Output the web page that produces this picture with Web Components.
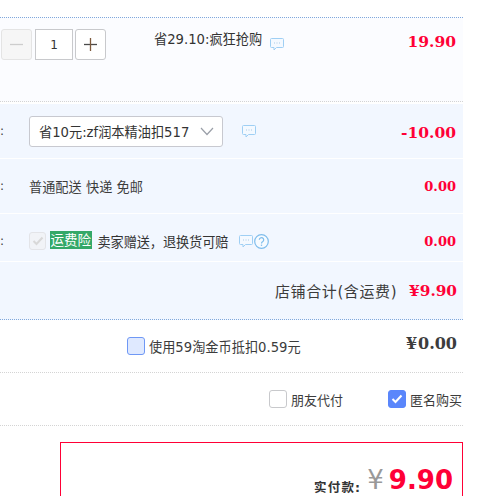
<!DOCTYPE html>
<html lang="zh">
<head>
<meta charset="utf-8">
<title>确认订单</title>
<style>
    html, body { margin: 0; height: 496px; overflow: hidden; background: #fff; }
    body { font: 13.2px "DejaVu Sans", "Noto Sans CJK SC", sans-serif; color: #3c3c3c; }
</style>
</head>
<body>
<order-page></order-page>
<script>
class ChatIcon extends HTMLElement {
    constructor() {
        super();
        this.attachShadow({ mode: 'open' });
        this.shadowRoot.innerHTML = `
            <style>
                :host { display: inline-flex; width: 14px; height: 13px; }
            </style>
            <svg width="14" height="13" viewBox="0 0 14 13" fill="none">
                <path d="M1.500 .5h11a1 1 0 0 1 1 1v7a1 1 0 0 1-1 1H6.500l-2.500 2.500V9.500H1.500a1 1 0 0 1-1-1v-7a1 1 0 0 1 1-1z" fill="#f4f9ff" stroke="#9fcff4"/>
                <path d="M4 5h1M6.500 5h1M9 5h1" stroke="#a9cbe6"/>
            </svg>
        `;
    }
}

class HelpIcon extends HTMLElement {
    constructor() {
        super();
        this.attachShadow({ mode: 'open' });
        this.shadowRoot.innerHTML = `
            <style>
                :host { display: inline-flex; width: 15px; height: 15px; }
            </style>
            <svg width="15" height="15" viewBox="0 0 15 15" fill="none">
                <circle cx="7.500" cy="7.500" r="6.800" fill="#f7fbff" stroke="#7fbdec" stroke-width="1.200"/>
                <path d="M5.300 5.800a2.200 2.200 0 1 1 3.500 1.800c-.8.500-1.300.9-1.300 1.900" stroke="#7fbdec" stroke-width="1.200"/>
                <path d="M7.500 10.600v1.300" stroke="#7fbdec" stroke-width="1.300"/>
            </svg>
        `;
    }
}

class QtyStepper extends HTMLElement {
    constructor() {
        super();
        this.attachShadow({ mode: 'open' });
        this.shadowRoot.innerHTML = `
            <style>
                :host { display: flex; }
                .btn, .val {
                    box-sizing: border-box;
                    height: 31px;
                    border: 1px solid #c8c9cc;
                    display: flex;
                    align-items: center;
                    justify-content: center;
                    background: #fff;
                }
                .btn { width: 31px; border-radius: 3px; }
                .btn--off { background: #f6f6f6; border-color: #e4e4e4; margin-right: 3px; }
                .val { width: 38px; margin-right: 2px; font: 12px "DejaVu Sans", sans-serif; color: #333; }
            </style>
            <div class="btn btn--off">
                <svg width="13" height="13"><path d="M0 6.500h13" stroke="#cdcdcd" stroke-width="1.300"/></svg>
            </div>
            <div class="val">1</div>
            <div class="btn">
                <svg width="13" height="13"><path d="M0 6.500h13" stroke="#4a4a4a" stroke-width="1.300"/><path d="M6.500 0v13" stroke="#7d5a3c" stroke-width="1.300"/></svg>
            </div>
        `;
    }
}

class CheckBox extends HTMLElement {
    constructor() {
        super();
        this.attachShadow({ mode: 'open' });
        const kind = this.getAttribute('kind') || 'empty';
        const tick = kind === 'on' || kind === 'off'
            ? `<svg width="12" height="10" viewBox="0 0 12 10"><path d="M1.500 5l3 3 6-6.500" fill="none" stroke="${kind === 'on' ? '#fff' : '#d8d8d8'}" stroke-width="2"/></svg>`
            : '';
        this.shadowRoot.innerHTML = `
            <style>
                :host { display: inline-flex; }
                .box {
                    box-sizing: border-box;
                    width: 18px;
                    height: 18px;
                    border-radius: 3px;
                    border: 1px solid #c8c9cc;
                    background: #fff;
                    display: flex;
                    align-items: center;
                    justify-content: center;
                }
                .on { background: #5a86fb; border-color: #5a86fb; }
                .off { width: 17px; background: #f1f3f7; border-color: #e3e4e8; }
                .hover { background: #dfe9ff; border-color: #6f98f5; }
            </style>
            <div class="box ${kind}">${tick}</div>
        `;
    }
}

class OrderLine extends HTMLElement {
    constructor() {
        super();
        this.attachShadow({ mode: 'open' });
        this.shadowRoot.innerHTML = `
            <style>
                :host {
                    display: flex;
                    align-items: center;
                    box-sizing: border-box;
                    width: 463px;
                    background: #f2f7ff;
                    color: #3c3c3c;
                }
                .colon { width: 29px; flex: none; font-size: 12px; }
                .main { flex: 1; display: flex; align-items: center; min-width: 0; }
                .price {
                    flex: none;
                    padding-right: 7px;
                    font: bold 13px "DejaVu Serif", serif;
                    color: #ff0036;
                }
            </style>
            <div class="colon">:</div>
            <div class="main"><slot></slot></div>
            <div class="price"><slot name="price"></slot></div>
        `;
    }
}

class CouponSelect extends HTMLElement {
    constructor() {
        super();
        this.attachShadow({ mode: 'open' });
        this.shadowRoot.innerHTML = `
            <style>
                :host {
                    display: flex;
                    align-items: center;
                    box-sizing: border-box;
                    width: 194px;
                    height: 31px;
                    padding: 0 8px 0 9px;
                    border: 1px solid #c8c9d0;
                    border-radius: 3px;
                    background: #fff;
                    color: #333;
                    white-space: nowrap;
                }
                .txt { flex: 1; }
            </style>
            <span class="txt"><slot></slot></span>
            <svg width="14" height="9" viewBox="0 0 14 9"><path d="M1 1l6 6.500L13 1" fill="none" stroke="#9a9fa8" stroke-width="1.200"/></svg>
        `;
    }
}

class OrderPage extends HTMLElement {
    constructor() {
        super();
        this.attachShadow({ mode: 'open' });
        this.shadowRoot.innerHTML = `
            <style>
                :host {
                    display: block;
                    width: 486px;
                    height: 496px;
                    padding-top: 17px;
                    box-sizing: border-box;
                    overflow: hidden;
                }
                .item {
                    width: 463px;
                    height: 85px;
                    box-sizing: border-box;
                    border-top: 1px dotted #80a8dc;
                    border-bottom: 1px dotted #d4d4d4;
                    background: #fbfcff;
                    display: flex;
                    align-items: flex-start;
                    padding-top: 11px;
                }
                qty-stepper { margin-left: 1px; }
                .promo {
                    margin-left: 48px;
                    display: flex;
                    align-items: flex-start;
                    flex: 1;
                    color: #333;
                    white-space: nowrap;
                }
                .promo chat-icon { margin: 9px 0 0 8px; }
                .item-price {
                    padding: 3px 7px 0 0;
                    font: bold 15.500px "DejaVu Serif", serif;
                    color: #ff0036;
                }
                .big { display: inline-block; margin-top: 2px; font-size: 15.500px; }
                .coupon { height: 55px; margin-top: 2px; border-bottom: 1px solid #fff; }
                .coupon chat-icon { margin: 0 0 0 19px; }
                .ship { height: 55px; border-bottom: 1px solid #fff; }
                .ins { height: 48px; padding-top: 7px; border-bottom: 1px solid #fff; }
                .ins .tag {
                    margin-left: 4px;
                    background: #34a868;
                    color: #fff;
                    font-size: 13.500px;
                    padding: 0 .5px;
                    line-height: 18px;
                    margin-top: -2px;
                }
                .ins .note { margin-left: 6px; color: #333; letter-spacing: -.1px; }
                .ins chat-icon { margin: 0 1px 0 11px; }
                .sum {
                    width: 463px;
                    height: 58px;
                    box-sizing: border-box;
                    background: #f2f7ff;
                    border-bottom: 1px dotted #80a8dc;
                    display: flex;
                    align-items: center;
                    justify-content: flex-end;
                    padding: 0 6px 0 0;
                    font-size: 15px;
                    letter-spacing: .6px;
                    color: #3c3c3c;
                }
                .sum b {
                    margin-left: 12px;
                    letter-spacing: 0;
                    font: bold 15.300px "DejaVu Serif", serif;
                    color: #ff0036;
                }
                .coins {
                    width: 463px;
                    height: 53px;
                    box-sizing: border-box;
                    border-bottom: 1px dotted #d4d4d4;
                    display: flex;
                    align-items: center;
                    padding: 0 6px 0 127px;
                }
                .coins span { margin-left: 4px; flex: 1; }
                .coins b {
                    font: bold 16px "DejaVu Serif", serif;
                    color: #3c3c3c;
                    margin-top: -5px;
                    word-spacing: 0;
                }
                .coins i { font-style: normal; margin-right: 1px; }
                .opts {
                    width: 463px;
                    height: 53px;
                    box-sizing: border-box;
                    border-bottom: 1px dotted #d4d4d4;
                    display: flex;
                    align-items: center;
                    justify-content: flex-end;
                    padding-right: 1px;
                    font-size: 13px;
                }
                .opts span { margin-left: 4px; }
                .opts span + check-box { margin-left: 45px; }
                .pay {
                    box-sizing: border-box;
                    width: 403px;
                    height: 90px;
                    margin: 16px 0 0 60px;
                    border: 1px solid #ff0036;
                    display: flex;
                    align-items: flex-start;
                    justify-content: flex-end;
                    padding: 22px 9px 0 0;
                    white-space: nowrap;
                }
                .pay .lbl { font-size: 12.500px; letter-spacing: 1.200px; font-weight: bold; color: #333; margin-top: 12px; }
                .pay .cur { font: 26px "DejaVu Sans", sans-serif; color: #999; margin-left: 6px; line-height: 30px; }
                .pay .amt { font: bold 26px "DejaVu Sans", sans-serif; color: #ff0036; margin-left: 5px; line-height: 30px; }
            </style>
            <div class="item">
                <qty-stepper></qty-stepper>
                <div class="promo">省29.10:疯狂抢购<chat-icon></chat-icon></div>
                <div class="item-price">19.90</div>
            </div>
            <order-line class="coupon">
                <coupon-select>省10元:zf润本精油扣517</coupon-select>
                <chat-icon></chat-icon>
                <span slot="price" class="big">-10.00</span>
            </order-line>
            <order-line class="ship">
                <span>普通配送 快递 免邮</span>
                <span slot="price">0.00</span>
            </order-line>
            <order-line class="ins">
                <check-box kind="off"></check-box>
                <span class="tag">运费险</span>
                <span class="note">卖家赠送，退换货可赔</span>
                <chat-icon></chat-icon>
                <help-icon></help-icon>
                <span slot="price">0.00</span>
            </order-line>
            <div class="sum">店铺合计(含运费)<b>¥9.90</b></div>
            <div class="coins">
                <check-box kind="hover"></check-box>
                <span>使用59淘金币抵扣0.59元</span>
                <b><i>¥</i>0.00</b>
            </div>
            <div class="opts">
                <check-box></check-box><span>朋友代付</span>
                <check-box kind="on"></check-box><span>匿名购买</span>
            </div>
            <div class="pay">
                <span class="lbl">实付款:</span>
                <span class="cur">¥</span>
                <span class="amt">9.90</span>
            </div>
        `;
    }
}

customElements.define('chat-icon', ChatIcon);
customElements.define('help-icon', HelpIcon);
customElements.define('qty-stepper', QtyStepper);
customElements.define('check-box', CheckBox);
customElements.define('order-line', OrderLine);
customElements.define('coupon-select', CouponSelect);
customElements.define('order-page', OrderPage);
</script>
</body>
</html>
